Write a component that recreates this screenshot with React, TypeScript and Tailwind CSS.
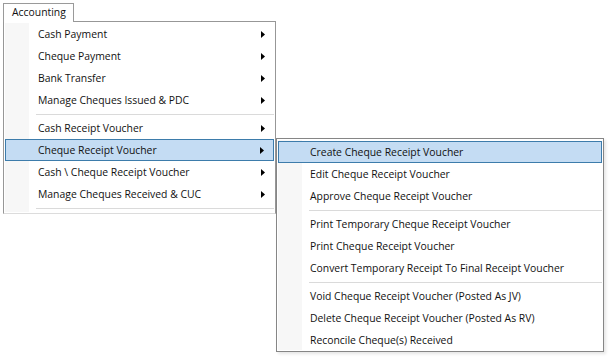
import React from 'react';

type Entry = { label: string; sub?: boolean; active?: boolean } | 'sep';

const mainItems: Entry[] = [
    { label: 'Cash Payment', sub: true },
    { label: 'Cheque Payment', sub: true },
    { label: 'Bank Transfer', sub: true },
    { label: 'Manage Cheques Issued & PDC', sub: true },
    'sep',
    { label: 'Cash Receipt Voucher', sub: true },
    { label: 'Cheque Receipt Voucher', sub: true, active: true },
    { label: 'Cash \\ Cheque Receipt Voucher', sub: true },
    { label: 'Manage Cheques Received & CUC', sub: true },
    'sep',
];

const subItems: Entry[] = [
    { label: 'Create Cheque Receipt Voucher', active: true },
    { label: 'Edit Cheque Receipt Voucher' },
    { label: 'Approve Cheque Receipt Voucher' },
    'sep',
    { label: 'Print Temporary Cheque Receipt Voucher' },
    { label: 'Print Cheque Receipt Voucher' },
    { label: 'Convert Temporary Receipt To Final Receipt Voucher' },
    'sep',
    { label: 'Void Cheque Receipt Voucher (Posted As JV)' },
    { label: 'Delete Cheque Receipt Voucher (Posted As RV)' },
    { label: 'Reconcile Cheque(s) Received' },
];

const Arrow = () => (
    <svg width="4" height="7" viewBox="0 0 4 7" className="shrink-0">
        <path d="M0 0 L4 3.5 L0 7 Z" fill="#000" />
    </svg>
);

const MenuRows: React.FC<{ items: Entry[]; indent: string; activeIndent: string }> = ({ items, indent, activeIndent }) => (
    <>
        {items.map((it, i) =>
            it === 'sep' ? (
                <div key={i} className="h-[6px] flex items-center pl-[31px]">
                    <div className="h-px w-full bg-[#dadada]" />
                </div>
            ) : (
                <div
                    key={i}
                    className={
                        'h-[22px] flex items-center pr-[9px] pt-px ' +
                        (it.active ? 'bg-[#c4dcf3] border border-[#3d7cab] pr-[8px] ' + activeIndent : indent)
                    }
                >
                    <span className="flex-1 whitespace-nowrap">{it.label}</span>
                    {it.sub && <Arrow />}
                </div>
            )
        )}
    </>
);

export default function App() {
    return (
        <div
            className="w-[612px] h-[364px] bg-white text-[10.4px] text-[#111] overflow-hidden pl-[3px] pt-[3px]"
            style={{ fontFamily: '"Open Sans", "Noto Sans", sans-serif' }}
        >
            <div className="relative z-10 w-[71px] h-[19px] bg-white border-l border-t border-r border-[#9a9a9a] -mb-px flex items-center pl-[8px]">
                Accounting
            </div>
            <div className="relative w-[273px]">
                <div className="relative border border-[#979797] border-b-[#dcdcdc] bg-white p-px pb-[2px]">
                    <div className="absolute left-px top-px bottom-px w-[24px] bg-[#f7f7f7]" />
                    <div className="relative">
                        <MenuRows items={mainItems} indent="pl-[33px]" activeIndent="pl-[32px]" />
                    </div>
                </div>
                <div className="absolute left-full top-[117px] w-[328px] border border-[#868686] bg-white px-px pt-[2px] shadow-[2px_2px_3px_rgba(0,0,0,0.1)]">
                    <div className="absolute left-px top-px bottom-px w-[24px] bg-[#f7f7f7]" />
                    <div className="relative">
                        <MenuRows items={subItems} indent="pl-[32px]" activeIndent="pl-[31px]" />
                    </div>
                </div>
            </div>
        </div>
    );
}
